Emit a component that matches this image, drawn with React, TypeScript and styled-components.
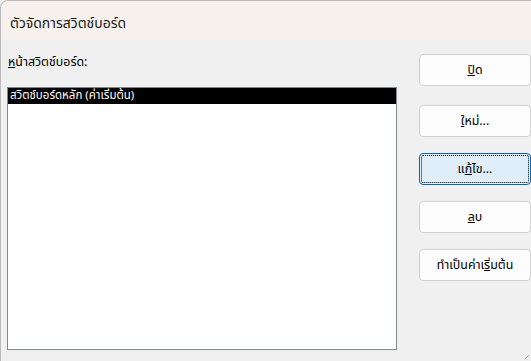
import React from 'react';
import styled, { createGlobalStyle } from 'styled-components';

const GlobalStyle = createGlobalStyle`
    html, body {
        margin: 0;
        padding: 0;
        background: #f0f0f0;
    }
    body {
        font-family: Tahoma, "Noto Sans Thai", "Noto Sans", "DejaVu Sans", sans-serif;
    }
`;

const Window = styled.div`
    width: 531px;
    height: 361px;
    box-sizing: border-box;
    background: #f0f0f0;
    border-left: 1px solid #b9b9b9;
    border-top: 1px solid #b9b9b9;
    border-top-left-radius: 8px;
    overflow: hidden;
    display: flex;
    flex-direction: column;
    position: relative;
`;

const TitleBar = styled.div`
    height: 39px;
    box-sizing: border-box;
    background: #f7f1ee;
    display: flex;
    align-items: center;
    padding: 5px 0 0 9px;
    font-size: 14px;
    color: #1a1a1a;
`;

const Body = styled.div`
    flex: 1;
    display: flex;
    padding: 0 0 0 6px;
`;

const LeftPane = styled.div`
    width: 390px;
    display: flex;
    flex-direction: column;
`;

const Label = styled.div`
    font-size: 12.4px;
    color: #000;
    height: 47px;
    display: flex;
    align-items: center;
    padding-left: 1px;
    padding-bottom: 3px;
    box-sizing: border-box;
`;

const ListBox = styled.div`
    height: 263px;
    background: #fff;
    border: 1px solid #828790;
    box-sizing: border-box;
`;

const ListItem = styled.div<{ selected?: boolean }>`
    height: 16px;
    line-height: 16px;
    padding-left: 2px;
    font-size: 11.5px;
    background: ${({ selected }) => (selected ? '#000' : 'transparent')};
    color: ${({ selected }) => (selected ? '#fff' : '#000')};
`;

const ButtonColumn = styled.div`
    margin-left: 22px;
    padding-top: 14px;
    display: flex;
    flex-direction: column;
    gap: 16px;
`;

const Button = styled.button<{ focused?: boolean }>`
    width: 112px;
    height: 32px;
    box-sizing: border-box;
    font-family: inherit;
    font-size: 12.4px;
    color: #000;
    background: ${({ focused }) => (focused ? '#e0eef9' : '#fdfdfd')};
    border: 1px solid ${({ focused }) => (focused ? '#0067c0' : '#d0d0d0')};
    border-radius: 4px;
    padding: 0;
    outline: ${({ focused }) => (focused ? '1px dotted #000' : 'none')};
    outline-offset: -3px;

    &:first-child {
        margin-bottom: 3px;
    }
`;

const Grip = styled.svg`
    position: absolute;
    right: 1px;
    bottom: 1px;
`;

export default function App() {
    return (
        <>
            <GlobalStyle />
            <Window>
                <TitleBar>ตัวจัดการสวิตช์บอร์ด</TitleBar>
                <Body>
                    <LeftPane>
                        <Label>
                            <span><u>ห</u>น้าสวิตช์บอร์ด:</span>
                        </Label>
                        <ListBox>
                            <ListItem selected>สวิตช์บอร์ดหลัก (ค่าเริ่มต้น)</ListItem>
                        </ListBox>
                    </LeftPane>
                    <ButtonColumn>
                        <Button><u>ปิ</u>ด</Button>
                        <Button><u>ใ</u>หม่...</Button>
                        <Button focused>แ<u>ก้</u>ไข...</Button>
                        <Button><u>ล</u>บ</Button>
                        <Button>ทำเป็นค่าเ<u>ริ</u>่มต้น</Button>
                    </ButtonColumn>
                </Body>
                <Grip width="6" height="6" viewBox="0 0 6 6">
                    <path d="M5 1 L1 5" stroke="#a0a0a0" strokeWidth="1" />
                </Grip>
            </Window>
        </>
    );
}
